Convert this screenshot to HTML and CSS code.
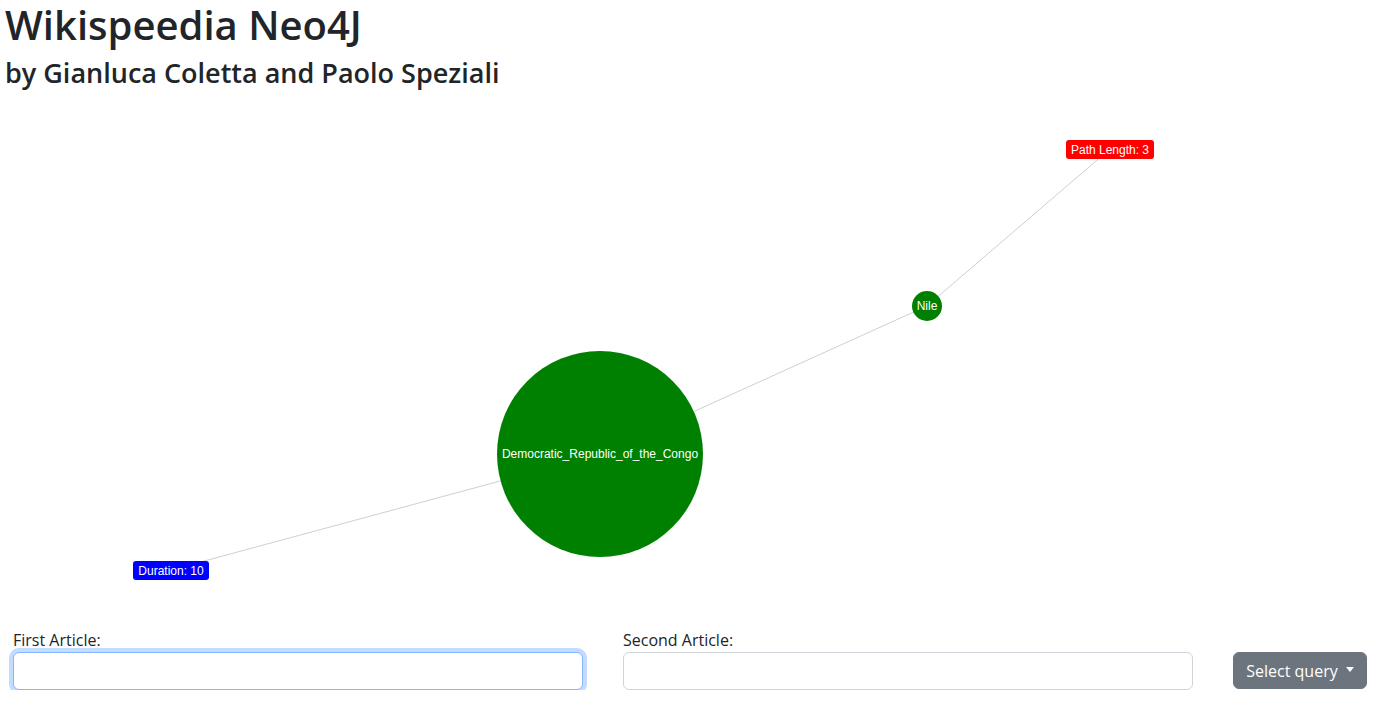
FILE: index.html
```html
<!DOCTYPE html>
<html lang="en">
<head>
<meta charset="utf-8">
<title>Wikispeedia Neo4J</title>
<link rel="stylesheet" href="styles.css">
</head>
<body>
<header class="header">
  <h1 class="title">Wikispeedia Neo4J</h1>
  <h2 class="subtitle">by Gianluca Coletta and Paolo Speziali</h2>
</header>
<svg class="graph" width="1392" height="524" viewBox="0 0 1392 524">
  <g class="links">
    <line x1="600" y1="350" x2="927" y2="202"></line>
    <line x1="927" y1="202" x2="1110" y2="45"></line>
    <line x1="600" y1="350" x2="171" y2="466"></line>
  </g>
  <g class="node">
    <circle cx="600" cy="350" r="103" fill="#008000"></circle>
    <text x="600" y="354">Democratic_Republic_of_the_Congo</text>
  </g>
  <g class="node">
    <circle cx="927" cy="202" r="15" fill="#008000"></circle>
    <text x="927" y="206">Nile</text>
  </g>
  <g class="node">
    <rect x="1066" y="36" width="88" height="19" rx="3" fill="#ff0000"></rect>
    <text x="1110" y="50">Path Length: 3</text>
  </g>
  <g class="node">
    <rect x="133" y="457" width="76" height="19" rx="3" fill="#0000ff"></rect>
    <text x="171" y="471">Duration: 10</text>
  </g>
</svg>
<form class="query-form">
  <div class="field">
    <label class="field-label" for="first">First Article:</label>
    <input class="field-input focused" id="first" type="text">
  </div>
  <div class="field">
    <label class="field-label" for="second">Second Article:</label>
    <input class="field-input" id="second" type="text">
  </div>
  <div class="field field-button">
    <button class="select-btn" type="button">Select query<span class="caret"></span></button>
  </div>
</form>
</body>
</html>
```
FILE: styles.css
```css
* { box-sizing: border-box; }
html, body { margin: 0; padding: 0; background: #fff; }
body {
  font-family: "Open Sans", "Noto Sans", sans-serif;
  color: #212529;
  font-size: 16px;
  line-height: 1.5;
}
.header { padding: 0 5px; height: 104px; }
.title {
  margin: 0;
  font-size: 40px;
  font-weight: 600;
  line-height: 50px;
}
.subtitle {
  margin: 6px 0 0;
  font-size: 27px;
  font-weight: 600;
  line-height: 34px;
}
.graph { display: block; }
.links line { stroke: #cfcfcf; stroke-width: 1; }
.node text {
  font-family: "Liberation Sans", Arial, sans-serif;
  font-size: 12px;
  fill: #fff;
  text-anchor: middle;
}
.query-form {
  display: grid;
  grid-template-columns: 570px 570px 134px;
  column-gap: 40px;
  padding-left: 13px;
}
.field { display: flex; flex-direction: column; }
.field-label { line-height: 24px; margin-bottom: 0; }
.field-input {
  height: 38px;
  border: 1px solid #ced4da;
  border-radius: 6px;
  padding: 6px 12px;
  font: inherit;
  background: #fff;
  outline: none;
}
.field-input.focused {
  border-color: #86b7fe;
  box-shadow: 0 0 0 4px rgba(13, 110, 253, 0.25);
}
.field-button { justify-content: flex-end; }
.select-btn {
  height: 37px;
  margin-bottom: 1px;
  background: #6c757d;
  color: #fff;
  border: 1px solid #6c757d;
  border-radius: 6px;
  font: inherit;
  padding: 6px 12px;
  display: flex;
  align-items: center;
  justify-content: center;
  white-space: nowrap;
}
.caret {
  display: inline-block;
  margin-left: 8px;
  width: 0;
  height: 0;
  border-top: 5px solid #fff;
  border-left: 4.5px solid transparent;
  border-right: 4.5px solid transparent;
  margin-top: -3px;
}
```
